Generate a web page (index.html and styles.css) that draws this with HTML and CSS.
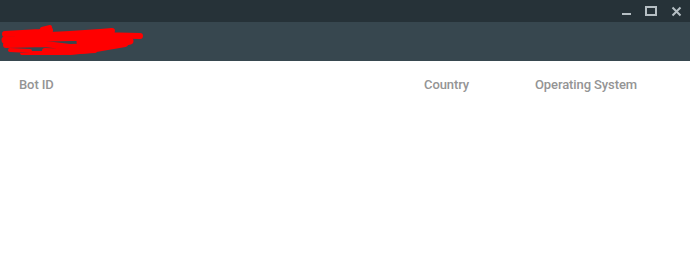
FILE: index.html
```html
<!DOCTYPE html>
<html>
<head>
<meta charset="utf-8">
<link rel="stylesheet" href="styles.css">
</head>
<body>
<div class="titlebar">
  <div class="win-btn">
    <svg width="11" height="11" viewBox="0 0 11 11"><rect x="1" y="7" width="9" height="2" fill="#b6bfc4"/></svg>
  </div>
  <div class="win-btn">
    <svg width="12" height="11" viewBox="0 0 12 11"><rect x="1" y="1" width="10" height="8" fill="none" stroke="#b6bfc4" stroke-width="2"/></svg>
  </div>
  <div class="win-btn">
    <svg width="11" height="11" viewBox="0 0 11 11"><path d="M1.5 1.5 L9.5 9.5 M9.5 1.5 L1.5 9.5" stroke="#b6bfc4" stroke-width="2"/></svg>
  </div>
</div>
<header class="appbar">
  <svg class="scribble" width="145" height="39" viewBox="0 0 145 39">
    <g fill="none" stroke="#ff0000" stroke-linecap="round" stroke-linejoin="round">
      <path d="M42 7 L50 5" stroke-width="4"/>
      <path d="M5 12 L40 10 L50 8 L30 14 L70 12 L100 10 L112 9 L98 13 L140 14" stroke-width="6"/>
      <path d="M5 18 L50 16 L90 15 L125 15 L80 20 L130 19 L112 23" stroke-width="7"/>
      <path d="M6 23 L45 22 L70 25 L100 24 L125 22 L90 28 L70 30 L45 29" stroke-width="6"/>
      <path d="M10 28 L30 29 L22 31 L60 31 L95 29" stroke-width="4"/>
    </g>
  </svg>
</header>
<div class="table-head">
  <div class="col">Bot ID</div>
  <div class="col">Country</div>
  <div class="col">Operating System</div>
</div>
</body>
</html>
```

FILE: styles.css
```css
html, body {
  margin: 0;
  padding: 0;
  background: #ffffff;
  font-family: Roboto, "Liberation Sans", sans-serif;
}

.titlebar {
  height: 22px;
  background: #263238;
  display: flex;
  justify-content: flex-end;
  align-items: center;
  padding-right: 4px;
  gap: 5px;
}

.win-btn {
  width: 20px;
  height: 22px;
  display: flex;
  align-items: center;
  justify-content: center;
}

.win-btn svg {
  display: block;
}

.appbar {
  height: 39px;
  background: #37474f;
  display: flex;
  align-items: center;
}

.scribble {
  display: block;
}

.table-head {
  display: grid;
  grid-template-columns: 405px 111px 1fr;
  padding: 16px 19px 0;
  height: 23px;
}

.col {
  font-size: 13px;
  font-weight: 500;
  color: #949494;
  line-height: 16px;
  letter-spacing: -0.1px;
}
```
